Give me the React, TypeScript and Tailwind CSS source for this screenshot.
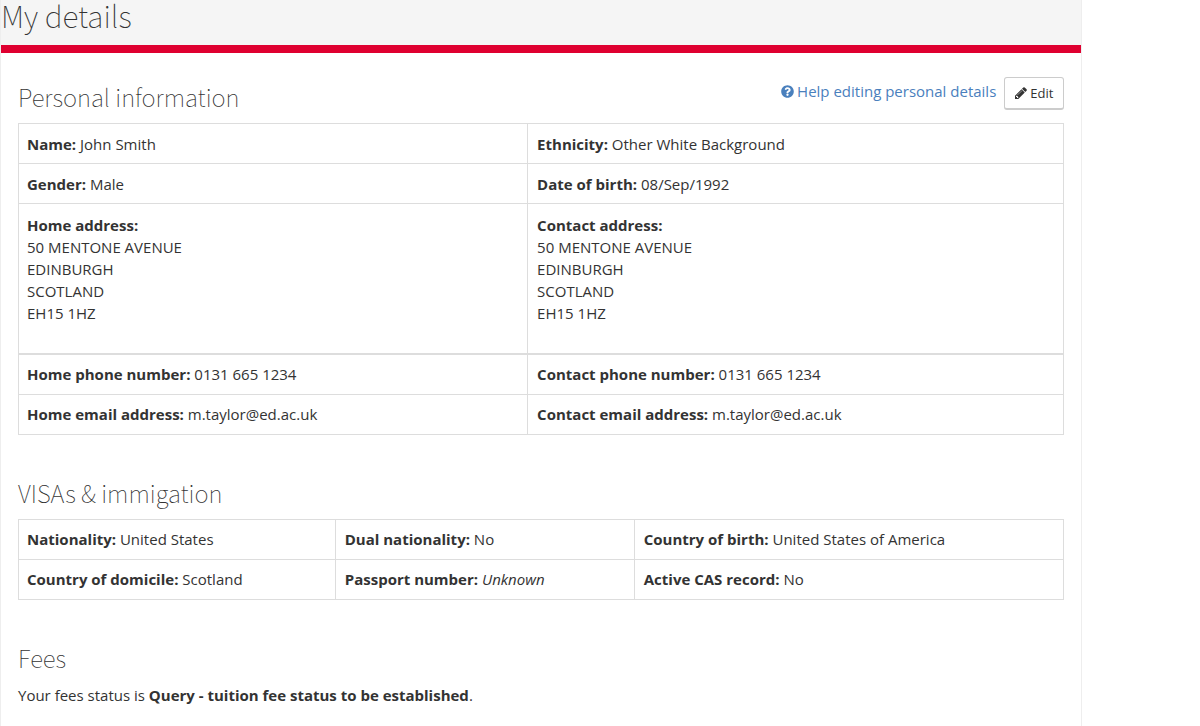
import type { ReactNode } from 'react';
import { FaQuestionCircle } from 'react-icons/fa';

interface Field {
  label: string;
  value: ReactNode;
}

const address = ['50 MENTONE AVENUE', 'EDINBURGH', 'SCOTLAND', 'EH15 1HZ'];

const basicRows: Field[][] = [
  [
    { label: 'Name', value: 'John Smith' },
    { label: 'Ethnicity', value: 'Other White Background' },
  ],
  [
    { label: 'Gender', value: 'Male' },
    { label: 'Date of birth', value: '08/Sep/1992' },
  ],
];

const contactRows: Field[][] = [
  [
    { label: 'Home phone number', value: '0131 665 1234' },
    { label: 'Contact phone number', value: '0131 665 1234' },
  ],
  [
    { label: 'Home email address', value: 'm.taylor@ed.ac.uk' },
    { label: 'Contact email address', value: 'm.taylor@ed.ac.uk' },
  ],
];

const visaRows: Field[][] = [
  [
    { label: 'Nationality', value: 'United States' },
    { label: 'Dual nationality', value: 'No' },
    { label: 'Country of birth', value: 'United States of America' },
  ],
  [
    { label: 'Country of domicile', value: 'Scotland' },
    { label: 'Passport number', value: <em>Unknown</em> },
    { label: 'Active CAS record', value: 'No' },
  ],
];

function PencilIcon() {
  return (
    <svg viewBox="0 0 1536 1536" className="w-3 h-3" fill="currentColor" aria-hidden="true">
      <path d="M363 1408l91-91-235-235-91 91v107h128v128h107zM886 480q0-22-22-22-10 0-17 7l-542 542q-7 7-7 17 0 22 22 22 10 0 17-7l542-542q7-7 7-17zM832 288l416 416-832 832H0v-416zM1515 384q0 53-37 90l-166 166-416-416 166-165q36-38 90-38 53 0 91 38l235 234q37 39 37 91z" />
    </svg>
  );
}

function SectionHeading({ children }: { children: ReactNode }) {
  return (
    <h2 className="font-['Noto_Sans_CJK_SC',sans-serif] font-thin text-[24px] leading-8">
      {children}
    </h2>
  );
}

function FieldRows({ rows }: { rows: Field[][] }) {
  return (
    <>
      {rows.map((row) => (
        <tr key={row[0].label}>
          {row.map((field) => (
            <td key={field.label} className="h-10 px-[9px] first:pl-2 border border-[#dddddd]">
              <strong>{field.label}:</strong> {field.value}
            </td>
          ))}
        </tr>
      ))}
    </>
  );
}

function AddressCell({ label }: { label: string }) {
  return (
    <td className="px-[9px] first:pl-2 pt-[10px] pb-[29px] border border-b-2 border-[#dddddd] align-top">
      <strong>{label}:</strong>
      {address.map((line) => (
        <div key={line}>{line}</div>
      ))}
    </td>
  );
}

export default function App() {
  return (
    <div className="min-h-screen bg-white pr-[9.8%] font-['Open_Sans',sans-serif] text-[15px] leading-[22px] text-[#333333]">
      <main className="min-h-screen border-x border-[#eeeeee]">
        <header className="h-[53px] bg-[#f5f5f5] border-b-8 border-[#df0030]">
          <h1 className="font-['Noto_Sans_CJK_SC',sans-serif] font-thin text-[30px] leading-[30px]">
            My details
          </h1>
        </header>

        <div className="px-[17px] pt-6">
          <section>
            <div className="flex items-start justify-between pb-[10px]">
              <div className="pt-1">
                <SectionHeading>Personal information</SectionHeading>
              </div>
              <div className="flex items-start gap-2">
                <a href="#help" className="flex items-center gap-[3px] pt-[3px] text-[#4a80bd]">
                  <FaQuestionCircle className="w-[13px] h-[13px]" />
                  Help editing personal details
                </a>
                <button
                  type="button"
                  className="flex items-center gap-[3px] h-[33px] px-[10px] rounded-[3px] border border-b-2 border-[#cccccc] bg-white text-[13px]"
                >
                  <PencilIcon />
                  Edit
                </button>
              </div>
            </div>
            <table className="w-full table-fixed border-collapse">
              <colgroup>
                <col className="w-[48.7%]" />
                <col />
              </colgroup>
              <tbody>
                <FieldRows rows={basicRows} />
                <tr>
                  <AddressCell label="Home address" />
                  <AddressCell label="Contact address" />
                </tr>
                <FieldRows rows={contactRows} />
              </tbody>
            </table>
          </section>

          <section className="pt-[42px]">
            <SectionHeading>VISAs &amp; immigation</SectionHeading>
            <table className="w-full mt-[10px] table-fixed border-collapse">
              <colgroup>
                <col className="w-[30.3%]" />
                <col className="w-[28.6%]" />
                <col />
              </colgroup>
              <tbody>
                <FieldRows rows={visaRows} />
              </tbody>
            </table>
          </section>

          <section className="pt-[42px]">
            <SectionHeading>Fees</SectionHeading>
            <p className="mt-[10px]">
              Your fees status is <strong>Query - tuition fee status to be established</strong>.
            </p>
          </section>
        </div>
      </main>
    </div>
  );
}
